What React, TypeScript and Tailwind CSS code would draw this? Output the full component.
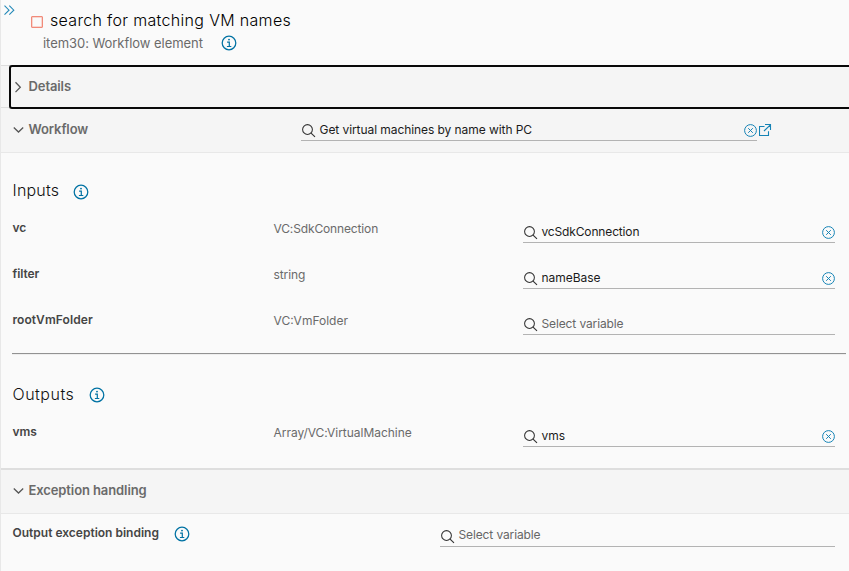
import type { ReactNode } from 'react';

function InfoIcon() {
  return (
    <svg className="block h-4 w-4 shrink-0" viewBox="0 0 16 16" fill="none" stroke="#0072a3">
      <circle cx="8" cy="8" r="6.8" strokeWidth="1.25" />
      <circle cx="8" cy="4.6" r="0.95" fill="#0072a3" stroke="none" />
      <path d="M6.1 7.2H8.3V11.3M5.9 11.5H10.3" strokeWidth="1.2" />
    </svg>
  );
}

function SearchIcon() {
  return (
    <svg className="block h-[14px] w-[14px] shrink-0" viewBox="0 0 14 14" fill="none" stroke="#333">
      <circle cx="5.5" cy="5.5" r="4.9" strokeWidth="1.05" />
      <path d="M9.1 9.1L13 12.9" strokeWidth="1.15" />
    </svg>
  );
}

function ClearIcon() {
  return (
    <svg className="block h-[13px] w-[13px] shrink-0" viewBox="0 0 13 13" fill="none" stroke="#1583b5">
      <circle cx="6.5" cy="6.5" r="5.9" strokeWidth="1" />
      <path d="M4.2 4.2L8.8 8.8M8.8 4.2L4.2 8.8" strokeWidth="1" />
    </svg>
  );
}

function OpenIcon() {
  return (
    <svg className="block h-[13px] w-[13px] shrink-0" viewBox="0 0 13 13" fill="none" stroke="#1583b5" strokeWidth="1.1">
      <path d="M5.5 2.5H.5V11.5H9.5V7.2M6 .5H11.5V6M11.4.8L5 7" />
    </svg>
  );
}

function Caret({ open }: { open?: boolean }) {
  return (
    <svg className="block h-3 w-3 shrink-0" viewBox="0 0 12 12" fill="none" stroke="#565656" strokeWidth="1.3">
      <path d={open ? 'M1.8 3.5L6.5 8L11.2 3.5' : 'M3.5 1.3L8.3 6.2L3.5 11.1'} />
    </svg>
  );
}

function Field({ className, value, tracking = '', raised, clear }: { className: string; value?: string; tracking?: string; raised?: boolean; clear?: boolean }) {
  return (
    <div className={`flex h-6 items-start border-b border-[#b3b3b3] ${className}`}>
      <div className="pt-[7px] pl-px"><SearchIcon /></div>
      <span className={`ml-[3.5px] flex-1 text-[12px] leading-5 whitespace-nowrap ${raised ? 'pt-[2px]' : 'pt-[3px]'} ${value ? `text-[#1b1b1b] ${tracking}` : 'text-[#666] tracking-[-0.12px]'}`}>
        {value ?? 'Select variable'}
      </span>
      {clear && <div className="pt-[7px]"><ClearIcon /></div>}
    </div>
  );
}

function Row({ name, nameTracking = '', type, typeTracking = '', children }: { name: string; nameTracking?: string; type: string; typeTracking?: string; children: ReactNode }) {
  return (
    <div className="flex h-[46px] pl-[11px] whitespace-nowrap">
      <div className={`w-[261px] pt-px pl-[0.5px] text-[12px] leading-5 font-semibold text-[#454545] ${nameTracking}`}>{name}</div>
      <div className={`w-[250px] pt-[2px] pl-[0.5px] text-[12px] leading-5 text-[#6a6a6a] ${typeTracking}`}>{type}</div>
      <div className="pt-[2px]">{children}</div>
    </div>
  );
}

export default function App() {
  return (
    <div className="h-[571px] w-full overflow-hidden border-l border-[#e8e8e8] bg-[#fafafa] font-['Inter','Liberation_Sans',sans-serif]">
      <header className="flex h-[65px]">
        <svg className="mt-[5px] ml-[3px] h-[11px] w-[11px] shrink-0" viewBox="0 0 11 11" fill="none" stroke="#2389b8" strokeWidth="1.1">
          <path d="M.5.7L5 5.2L.5 9.7M5.3.7L9.8 5.2L5.3 9.7" />
        </svg>
        <div className="pl-4">
          <div className="flex h-[33px] items-start pt-[9px]">
            <span className="mt-[7px] h-3 w-3 rounded-[1px] border-[1.5px] border-[#f18b7a] shadow-[inset_0_0_0_0.5px_#f6b3a8]" />
            <h1 className="ml-[7px] text-[16px] leading-[22px] font-light whitespace-nowrap text-black tracking-[0.32px]">search for matching VM names</h1>
          </div>
          <div className="flex items-center pl-[12px] text-[13px] leading-5 text-[#6a6a6a]">
            <span className="w-[178px] whitespace-nowrap tracking-[-0.05px]">item30: Workflow element</span>
            <InfoIcon />
          </div>
        </div>
      </header>

      <div className="relative z-10 h-[43px] border-y border-[#dedede] bg-[#f5f5f5] pl-2">
        <div className="-mt-px flex h-11 items-center rounded-l-[3px] border-2 border-r-0 border-[#080808] bg-[#f5f5f5] pl-px text-[13px] font-semibold text-[#6a6a6a]">
          <Caret />
          <span className="ml-[4.5px] tracking-[-0.1px]">Details</span>
        </div>
      </div>
      <div className="flex h-[45px] border-b border-[#e8e8e8] bg-[#f5f5f5] pl-[11px] text-[13px] text-[#6a6a6a]">
        <div className="flex h-[43px] w-[289px] items-center font-semibold">
          <Caret open />
          <span className="ml-[4.5px] tracking-[-0.1px]">Workflow</span>
        </div>
        <div className="flex pt-[9px]">
          <Field className="w-[456px]" value="Get virtual machines by name with PC" tracking="tracking-[-0.07px]" clear />
          <div className="pt-[7px] pl-[2px]"><OpenIcon /></div>
        </div>
      </div>

      <section className="h-[200px] pt-[25px]">
        <div className="flex items-center pl-[11px]">
          <h2 className="w-[61px] pl-[0.5px] text-[16px] leading-6 font-light text-[#111] tracking-[0.2px]">Inputs</h2>
          <div className="pt-[4px]"><InfoIcon /></div>
        </div>
        <div className="pt-[15px]">
          <Row name="vc" type="VC:SdkConnection" typeTracking="tracking-[-0.14px]">
            <Field className="w-[312px]" value="vcSdkConnection" tracking="tracking-[-0.15px]" clear />
          </Row>
          <Row name="filter" nameTracking="tracking-[-0.1px]" type="string" typeTracking="tracking-[-0.1px]">
            <Field className="w-[312px]" value="nameBase" tracking="tracking-[-0.05px]" clear />
          </Row>
          <Row name="rootVmFolder" nameTracking="tracking-[0.08px]" type="VC:VmFolder">
            <Field className="w-[312px]" />
          </Row>
        </div>
      </section>
      <div className="mr-[3px] ml-[11px] h-[2px] border-t border-[#929292] bg-[#eee]" />

      <section className="h-[113px] pt-[27px]">
        <div className="flex items-center pl-[11px]">
          <h2 className="w-[77px] pl-[0.5px] text-[16px] leading-6 font-light text-[#111] tracking-[0.5px]">Outputs</h2>
          <div className="pt-[2px]"><InfoIcon /></div>
        </div>
        <div className="pt-[15px]">
          <Row name="vms" type="Array/VC:VirtualMachine" typeTracking="tracking-[-0.03px]">
            <Field className="w-[312px]" value="vms" clear />
          </Row>
        </div>
      </section>

      <div className="flex h-[46px] items-center border-t-2 border-b border-t-[#dedede] border-b-[#e8e8e8] bg-[#f5f5f5] pb-px pl-[11px] text-[13px] font-semibold text-[#6a6a6a]">
        <Caret open />
        <span className="ml-[4.5px] tracking-[-0.1px]">Exception handling</span>
      </div>
      <div className="flex pt-[9px] pl-[11px]">
        <div className="flex w-[428px] items-start">
          <span className="w-[162px] pl-[0.5px] text-[12px] leading-5 font-semibold whitespace-nowrap text-[#454545]">Output exception binding</span>
          <div className="pt-[3px]"><InfoIcon /></div>
        </div>
        <Field className="w-[395px]" raised />
      </div>
    </div>
  );
}
